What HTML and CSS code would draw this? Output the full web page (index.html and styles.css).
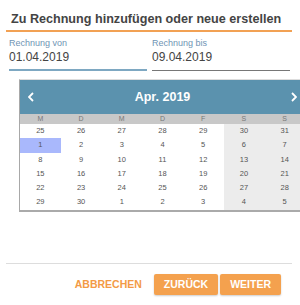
FILE: index.html
```html
<!DOCTYPE html>
<html lang="de">
<head>
<meta charset="utf-8">
<link rel="stylesheet" href="styles.css">
</head>
<body>
<div class="page">
  <div class="dialog">
    <h1 class="title">Zu Rechnung hinzufügen oder neue erstellen</h1>
    <div class="fields">
      <div class="field field-active">
        <div class="label">Rechnung von</div>
        <div class="value">01.04.2019</div>
      </div>
      <div class="field">
        <div class="label">Rechnung bis</div>
        <div class="value">09.04.2019</div>
      </div>
    </div>
    <div class="calendar">
      <div class="cal-head">
        <svg class="chev" width="6" height="10" viewBox="0 0 6 10"><polyline points="5,1 1,5 5,9" fill="none" stroke="#fff" stroke-width="1.8"/></svg>
        <span class="month">Apr. 2019</span>
        <svg class="chev" width="6" height="10" viewBox="0 0 6 10"><polyline points="1,1 5,5 1,9" fill="none" stroke="#fff" stroke-width="1.8"/></svg>
      </div>
      <div class="weekdays">
        <span>M</span><span>D</span><span>M</span><span>D</span><span>F</span><span>S</span><span>S</span>
      </div>
      <div class="days">
        <span>25</span><span>26</span><span>27</span><span>28</span><span>29</span><span class="we">30</span><span class="we">31</span>
        <span class="sel">1</span><span>2</span><span>3</span><span>4</span><span>5</span><span class="we">6</span><span class="we">7</span>
        <span>8</span><span>9</span><span>10</span><span>11</span><span>12</span><span class="we">13</span><span class="we">14</span>
        <span>15</span><span>16</span><span>17</span><span>18</span><span>19</span><span class="we">20</span><span class="we">21</span>
        <span>22</span><span>23</span><span>24</span><span>25</span><span>26</span><span class="we">27</span><span class="we">28</span>
        <span>29</span><span>30</span><span>1</span><span>2</span><span>3</span><span class="we">4</span><span class="we">5</span>
      </div>
    </div>
    <div class="footer">
      <button class="btn btn-flat">ABBRECHEN</button>
      <button class="btn btn-solid">ZURÜCK</button>
      <button class="btn btn-solid">WEITER</button>
    </div>
  </div>
</div>
</body>
</html>
```
FILE: styles.css
```css
html, body {
  margin: 0;
  padding: 0;
  background: #fff;
}
.page {
  width: 300px;
  height: 305px;
  overflow: hidden;
  font-family: "Liberation Sans", Arial, sans-serif;
}
.dialog {
  padding: 0 8px 0 6px;
}
.title {
  margin: 0;
  padding: 10px 0 2px 5px;
  font-size: 12.6px;
  line-height: 18px;
  font-weight: bold;
  color: #444;
  white-space: nowrap;
  border-bottom: 2px solid #f2a154;
}
.fields {
  display: grid;
  grid-template-columns: 138px 138px;
  column-gap: 5px;
  padding: 6px 0 0 3px;
}
.field {
  border-bottom: 1px solid #777;
  padding-bottom: 4px;
}
.field-active {
  border-bottom: 2px solid #7ea8c2;
}
.label {
  font-size: 9px;
  line-height: 11px;
  color: #6f94b4;
}
.value {
  margin-top: 1px;
  font-size: 12px;
  line-height: 15px;
  color: #444;
}
.calendar {
  margin: 8px 0 0 13px;
  width: 285px;
  border-top: 1px solid #ddd;
  border-left: 1px solid #a8a8a8;
  border-bottom: 2px solid #aaa;
}
.cal-head {
  height: 34px;
  background: #5b92ae;
  display: flex;
  align-items: center;
  justify-content: space-between;
  padding: 0 8px 0 8px;
}
.month {
  color: #fff;
  font-weight: bold;
  font-size: 12.5px;
}
.chev {
  display: block;
}
.weekdays {
  display: grid;
  grid-template-columns: repeat(7, 1fr);
  height: 10px;
  background: #c8c8c8;
  font-size: 7px;
  line-height: 10px;
  color: #777;
  text-align: center;
}
.days {
  display: grid;
  grid-template-columns: repeat(7, 1fr);
  grid-auto-rows: 14.3px;
  font-size: 7.5px;
  color: #555;
  text-align: center;
}
.days span {
  line-height: 14.3px;
}
.days .we {
  background: #ececec;
}
.days .sel {
  background: #a9b8fc;
}
.footer {
  margin-top: 51px;
  border-top: 1px solid #ddd;
  padding: 10px 11px 0 0;
  display: flex;
  justify-content: flex-end;
  gap: 2px;
}
.btn {
  font-family: "Liberation Sans", Arial, sans-serif;
  font-size: 10.5px;
  font-weight: bold;
  height: 21px;
  padding: 0 10px;
  border: none;
  border-radius: 2px;
  cursor: pointer;
}
.btn-flat {
  background: transparent;
  color: #f39a45;
}
.btn-solid {
  background: #f4a14e;
  color: #fff;
  box-shadow: 0 1px 2px rgba(0,0,0,0.2);
}
```
